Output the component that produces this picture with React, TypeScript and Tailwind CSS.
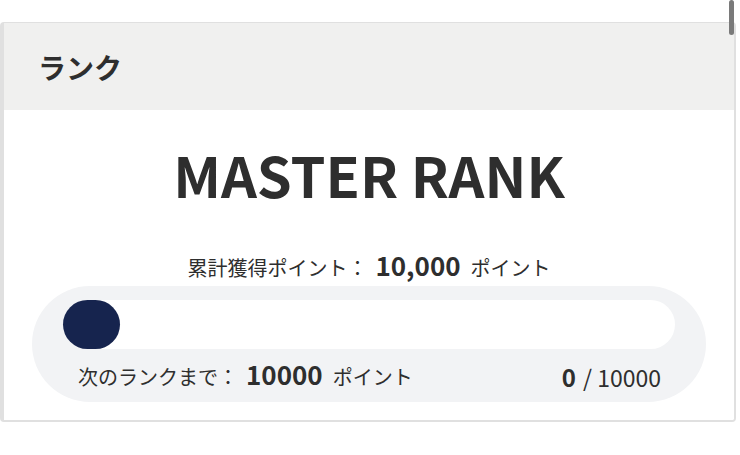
import React from "react";

export default function App() {
  const font = { fontFamily: '"Noto Sans CJK JP", "Noto Sans", sans-serif' };
  return (
    <div className="relative w-[740px] h-[455px] bg-white pt-[22px] text-[#2e2e2e]" style={font}>
      <div className="w-[736px] border-l-[4px] border-r-[2px] border-t border-b-2 border-[#e0e0e0] rounded-[4px] overflow-hidden">
        <div className="h-[87px] bg-[#f0f0ef] pl-[34px] flex items-center">
          <span className="text-[28px] font-bold leading-none">ランク</span>
        </div>
        <div className="bg-white flex flex-col items-center pb-[18px]">
          <div className="mt-[36px] text-[56px] font-bold leading-none">MASTER RANK</div>
          <div className="mt-[50px] flex items-baseline justify-center">
            <span className="text-[20px] leading-none">累計獲得ポイント：</span>
            <span className="text-[26px] font-bold leading-none ml-[8px]">10,000</span>
            <span className="text-[20px] leading-none ml-[10px]">ポイント</span>
          </div>
          <div className="mt-[8px] w-[674px] h-[116px] rounded-full bg-[#f2f3f5] pt-[14px] px-[31px]">
            <div className="h-[49px] rounded-full bg-white">
              <div className="w-[57px] h-[49px] rounded-full bg-[#16244e]" />
            </div>
            <div className="mt-[12px] pl-[15px] pr-[14px] flex items-baseline justify-between">
              <div className="flex items-baseline">
                <span className="text-[20px] leading-none">次のランクまで：</span>
                <span className="text-[26px] font-bold leading-none ml-[8px]">10000</span>
                <span className="text-[20px] leading-none ml-[10px]">ポイント</span>
              </div>
              <div className="flex items-baseline translate-y-[2px]">
                <span className="text-[24px] font-bold leading-none">0</span>
                <span className="text-[23px] leading-none ml-[7px]">/ 10000</span>
              </div>
            </div>
          </div>
        </div>
      </div>
      <div className="absolute right-[6px] top-0 w-[5px] h-[35px] rounded-full bg-[#7a7a7a]" />
    </div>
  );
}
